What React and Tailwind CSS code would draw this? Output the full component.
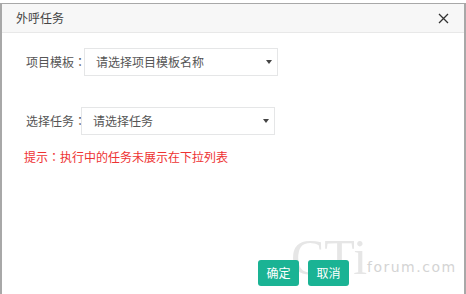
import React from 'react';

const Caret = () => (
  <span className="ml-auto w-0 h-0 border-l-[3px] border-r-[3px] border-t-[4px] border-l-transparent border-r-transparent border-t-[#444]" />
);

const SelectRow = ({ label, placeholder, offset }) => (
  <div className="flex items-center">
    <span
      className="text-[12px] text-[#555] pl-[24px] whitespace-nowrap"
      style={{ width: offset, fontFamily: '"Noto Sans CJK JP", "Noto Sans CJK SC", sans-serif' }}
    >
      {label}
    </span>
    <div className="flex items-center w-[194px] h-[28px] border border-[#e5e6e7] bg-white pl-[11px] pr-[5px]">
      <span className="text-[12px] text-[#555]">{placeholder}</span>
      <Caret />
    </div>
  </div>
);

export default function App() {
  return (
    <div
      className="w-[466px] h-[294px] bg-white overflow-hidden"
      style={{ fontFamily: '"Noto Sans CJK SC", "Noto Sans", sans-serif' }}
    >
      <div className="mt-[3px] h-[291px] border-l-2 border-r-2 border-t border-[#a8a8a8] flex flex-col">
        <div className="h-[29px] flex items-center justify-between px-[14px] bg-[#f7f7f7] border-b border-[#e8e8e8]">
          <span className="text-[12px] text-[#444]">外呼任务</span>
          <svg width="11" height="11" viewBox="0 0 11 11" className="mr-[1px]">
            <path d="M1 1L10 10M10 1L1 10" stroke="#333" strokeWidth="1.3" />
          </svg>
        </div>
        <div className="relative flex-1">
          <div className="pt-[15px]">
            <SelectRow label="项目模板：" placeholder="请选择项目模板名称" offset="82px" />
          </div>
          <div className="pt-[31px]">
            <SelectRow label="选择任务：" placeholder="请选择任务" offset="79px" />
          </div>
          <div
            className="pt-[13px] pl-[22px] text-[12px] text-[#ee3333]"
            style={{ fontFamily: '"Noto Sans CJK JP", "Noto Sans CJK SC", sans-serif' }}
          >
            提示：执行中的任务未展示在下拉列表
          </div>
          <div
            className="absolute left-[289px] top-[199px] text-[50px] leading-none text-[#e6e6e6] pointer-events-none"
            style={{ fontFamily: '"Liberation Serif", serif' }}
          >
            CTi
          </div>
          <div
            className="absolute left-[365px] top-[227px] text-[14px] leading-none text-[#d4d4d4] tracking-[1.5px] pointer-events-none"
            style={{ fontFamily: '"DejaVu Sans", sans-serif' }}
          >
            forum.com
          </div>
          <div className="absolute left-[256px] top-[227px] flex gap-[9px]">
            <button className="w-[41px] h-[26px] rounded-[3px] bg-[#1ab394] text-white text-[12px]">确定</button>
            <button className="w-[41px] h-[26px] rounded-[3px] bg-[#1ab394] text-white text-[12px]">取消</button>
          </div>
        </div>
      </div>
    </div>
  );
}
